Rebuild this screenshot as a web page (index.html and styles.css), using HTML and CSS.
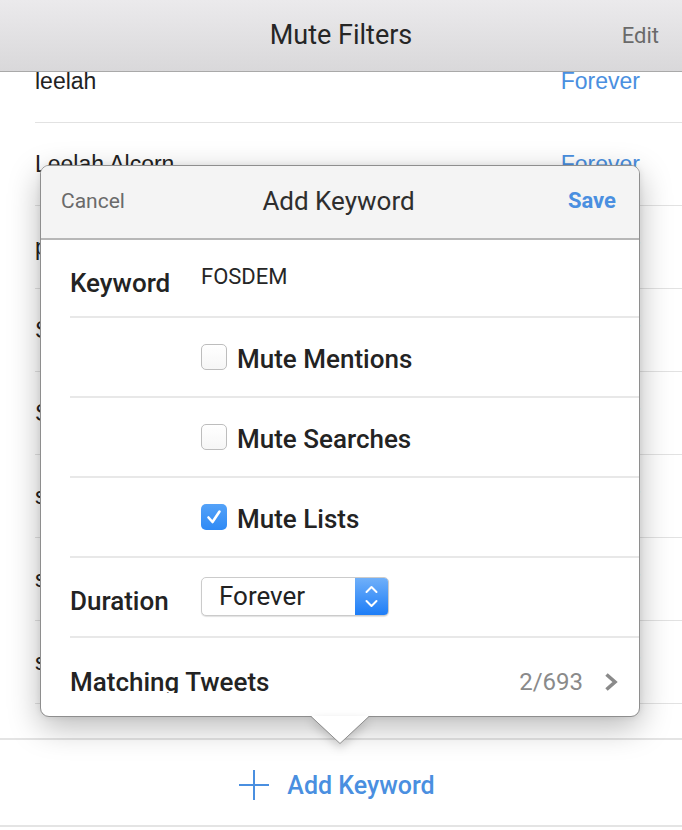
FILE: index.html
```html
<!DOCTYPE html>
<html lang="en">
<head>
<meta charset="utf-8">
<title>Mute Filters</title>
<link rel="stylesheet" href="styles.css">
</head>
<body>
<div class="window">
  <header class="titlebar">
    <span></span>
    <h1 class="title">Mute Filters</h1>
    <span class="edit">Edit</span>
  </header>

  <ul class="filters">
    <li class="filter"><span class="name">leelah</span><span class="dur">Forever</span></li>
    <li class="filter"><span class="name">Leelah Alcorn</span><span class="dur">Forever</span></li>
    <li class="filter"><span class="name">pride</span><span class="dur">Forever</span></li>
    <li class="filter"><span class="name">Sarah</span><span class="dur">Forever</span></li>
    <li class="filter"><span class="name">Snowden</span><span class="dur">Forever</span></li>
    <li class="filter"><span class="name">spoilers</span><span class="dur">Forever</span></li>
    <li class="filter"><span class="name">sports</span><span class="dur">Forever</span></li>
    <li class="filter"><span class="name">superbowl</span><span class="dur">Forever</span></li>
  </ul>

  <div class="add-bar">
    <svg class="plus" width="30" height="30" viewBox="0 0 30 30"><path d="M15 0V30M0 15H30" stroke="#4a8fe0" stroke-width="2" fill="none"/></svg>
    <span class="add-label">Add Keyword</span>
  </div>

  <div class="popover">
    <div class="pop-head">
      <span class="cancel">Cancel</span>
      <span class="pop-title">Add Keyword</span>
      <span class="save">Save</span>
    </div>
    <div class="pop-body">
      <div class="row kw-row">
        <span class="label">Keyword</span>
        <span class="kw-value">FOSDEM</span>
      </div>
      <div class="row">
        <span></span>
        <span class="check-item"><span class="box"></span><span class="label">Mute Mentions</span></span>
      </div>
      <div class="row">
        <span></span>
        <span class="check-item"><span class="box"></span><span class="label">Mute Searches</span></span>
      </div>
      <div class="row">
        <span></span>
        <span class="check-item"><span class="box checked"><svg width="26" height="26" viewBox="0 0 26 26"><path d="M7.5 13.5L11.5 18L18.5 7.5" stroke="#fff" stroke-width="2.6" fill="none" stroke-linecap="round" stroke-linejoin="round"/></svg></span><span class="label">Mute Lists</span></span>
      </div>
      <div class="row dur-row">
        <span class="label">Duration</span>
        <span class="select">
          <span class="select-text">Forever</span>
          <span class="stepper"><svg width="33" height="39" viewBox="0 0 33 39"><path d="M11.5 15L16.5 10L21.5 15M11.5 24L16.5 29L21.5 24" stroke="#fff" stroke-width="2" fill="none" stroke-linecap="round" stroke-linejoin="round"/></svg></span>
        </span>
      </div>
      <div class="row match-row">
        <span class="label">Matching Tweets</span>
        <span class="match-right">
          <span class="count">2/693</span>
          <svg width="16" height="20" viewBox="0 0 16 20"><path d="M3.5 2.5L12 10L3.5 17.5" stroke="#8a8a8a" stroke-width="3.6" fill="none"/></svg>
        </span>
      </div>
    </div>
    <svg class="arrow" width="58" height="30" viewBox="0 0 58 30"><polygon points="0,0 58,0 29,27.5" fill="#fff"/><path d="M0 0.5L29 27.5L58 0.5" stroke="#8e8e8e" stroke-width="1" fill="none"/></svg>
  </div>
</div>
</body>
</html>
```

FILE: styles.css
```css
* { box-sizing: border-box; }

html, body {
  margin: 0;
  padding: 0;
  background: #ffffff;
}

body {
  font-family: Roboto, "Noto Sans", sans-serif;
  color: #262626;
}

.window {
  position: relative;
  width: 682px;
  height: 830px;
  overflow: hidden;
  background: #fff;
}

/* title bar overlays the scrolled list */
.titlebar {
  position: absolute;
  top: 0;
  left: 0;
  right: 0;
  z-index: 2;
  height: 72px;
  display: grid;
  grid-template-columns: 1fr auto 1fr;
  align-items: center;
  padding: 0 23px 1px;
  background: linear-gradient(#ebeaec, #d9d8da);
  border-bottom: 1px solid #a9a9a9;
}

.title {
  margin: 0;
  font-size: 27px;
  font-weight: 400;
  color: #262626;
}

.edit {
  justify-self: end;
  font-size: 22px;
  color: #6a6a6a;
}

/* background list */
.filters {
  list-style: none;
  margin: 0;
  padding: 40px 0 0;
}

.filter {
  height: 83px;
  margin-left: 35px;
  padding-right: 42px;
  display: flex;
  align-items: center;
  justify-content: space-between;
  border-bottom: 1px solid #e2e2e2;
  font-family: "Liberation Sans", Arial, sans-serif;
  font-size: 23px;
}

.name { color: #222; }
.dur { color: #4a8fe0; }

.add-bar {
  margin-top: 34px;
  height: 89px;
  display: flex;
  align-items: center;
  justify-content: center;
  gap: 18px;
  padding: 5px 8px 0 0;
  border-top: 2px solid #e4e4e4;
  border-bottom: 2px solid #e4e4e4;
}

.add-label {
  font-size: 25px;
  font-weight: 500;
  color: #4a8fe0;
}

/* popover */
.popover {
  position: absolute;
  left: 40px;
  top: 165px;
  width: 600px;
  z-index: 3;
  background: #fff;
  border: 1px solid #8e8e8e;
  border-radius: 9px;
  padding-bottom: 23px;
  box-shadow: 0 10px 32px rgba(0, 0, 0, 0.28), 0 0 6px rgba(0, 0, 0, 0.08);
}

.pop-head {
  height: 74px;
  display: grid;
  grid-template-columns: 1fr auto 1fr;
  align-items: center;
  padding: 0 23px 3px 20px;
  background: #f4f4f4;
  border-bottom: 2px solid #b7b7b7;
  border-radius: 8px 8px 0 0;
}

.cancel {
  font-size: 21px;
  color: #6a6a6a;
}

.pop-title {
  font-size: 26px;
  color: #2e2e2e;
}

.save {
  justify-self: end;
  font-size: 22px;
  font-weight: 700;
  color: #4a8fe0;
}

.pop-body {
  height: 453px;
  overflow: hidden;
}

.row {
  height: 80px;
  margin-left: 29px;
  display: grid;
  grid-template-columns: 131px 1fr;
  align-items: center;
  border-bottom: 2px solid #e8e8e8;
}

.kw-row { height: 78px; }

.label {
  font-size: 26px;
  font-weight: 500;
  color: #232323;
}

.kw-row .label { margin-top: 10px; }

.kw-value {
  margin-top: -4px;
  font-size: 22px;
  color: #262626;
}

.check-item {
  display: flex;
  align-items: center;
  gap: 10px;
}

.check-item .label { margin-top: 3px; }

.box {
  width: 26px;
  height: 26px;
  border: 1px solid #bdbdbd;
  border-radius: 5px;
  background: linear-gradient(#ffffff, #f6f6f6);
}

.box.checked {
  border: none;
  background: linear-gradient(#54a2f8, #2f8af5);
}

.box svg { display: block; }

.dur-row .label { margin-top: 8px; }

.select {
  width: 188px;
  height: 39px;
  margin-top: -2px;
  display: flex;
  align-items: center;
  justify-content: space-between;
  border: 1px solid #cbcbcb;
  border-radius: 5px;
  background: #fff;
  box-shadow: 0 1px 1px rgba(0, 0, 0, 0.12);
  overflow: hidden;
}

.select-text {
  padding-left: 17px;
  font-size: 26px;
  color: #222;
}

.stepper {
  width: 33px;
  height: 39px;
  background: linear-gradient(#72b1f9, #1b7cf7);
}

.stepper svg { display: block; }

.match-row {
  grid-template-columns: 1fr auto;
  border-bottom: none;
  padding-right: 20px;
}

.match-row .label { margin-top: 8px; }

.match-right {
  display: flex;
  align-items: center;
  gap: 20px;
  margin-top: 8px;
}

.count {
  font-size: 24px;
  color: #8a8a8a;
}

.match-right svg { display: block; }

.arrow {
  position: absolute;
  left: 270px;
  top: 100%;
  display: block;
  filter: drop-shadow(0 4px 5px rgba(0, 0, 0, 0.18));
}
```
